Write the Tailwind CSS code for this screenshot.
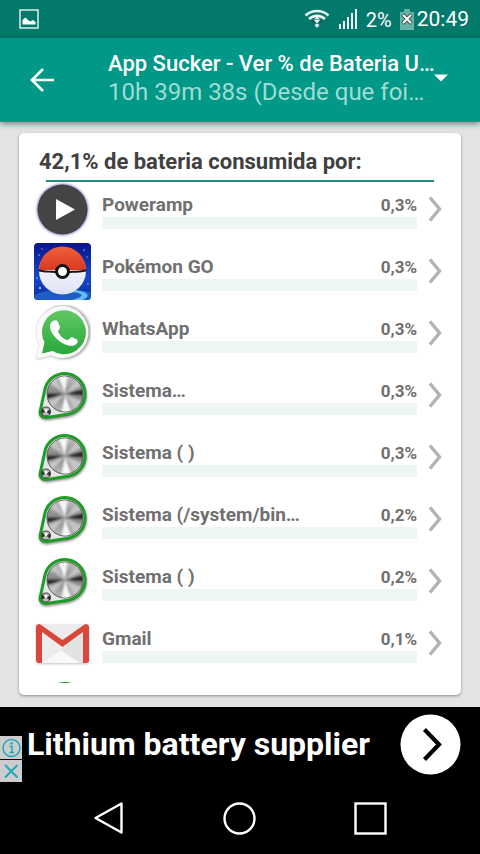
<!DOCTYPE html>
<html lang="pt">
<head>
  <meta charset="UTF-8">
  <meta name="viewport" content="width=device-width, initial-scale=1.0">
  <title>App Sucker</title>
  <script src="https://cdn.jsdelivr.net/npm/@tailwindcss/browser@4"></script>
</head>
<body class="flex flex-col h-screen overflow-hidden bg-[#e4e4e4] font-[Roboto,sans-serif]">

  <!-- Shared icons -->
  <svg class="absolute h-0 w-0" aria-hidden="true">
    <defs>
      <linearGradient id="red" x1="0" y1="0" x2="0" y2="1"><stop offset="0" stop-color="#f0603a"/><stop offset="1" stop-color="#d93a20"/></linearGradient>
      <linearGradient id="sky" x1="0" y1="0" x2="0" y2="1"><stop offset="0" stop-color="#08158a"/><stop offset="0.6" stop-color="#1648c8"/><stop offset="1" stop-color="#0b2a9c"/></linearGradient>
      <linearGradient id="white" x1="0" y1="0" x2="0" y2="1"><stop offset="0" stop-color="#ffffff"/><stop offset="1" stop-color="#dfe4f4"/></linearGradient>
      <linearGradient id="whats" x1="0" y1="0" x2="0" y2="1"><stop offset="0" stop-color="#62c864"/><stop offset="1" stop-color="#28a83c"/></linearGradient>
      <linearGradient id="metal" x1="0" y1="0" x2="0" y2="1"><stop offset="0" stop-color="#c4c4c4"/><stop offset="0.5" stop-color="#808080"/><stop offset="1" stop-color="#bdbdbd"/></linearGradient>
      <filter id="soft" x="-20%" y="-20%" width="140%" height="140%"><feGaussianBlur stdDeviation="1.3"/></filter>
      <clipPath id="disc"><circle cx="31" cy="27" r="17.500"/></clipPath>
    </defs>
    <symbol id="drum" viewBox="0 0 57 57">
      <path d="M31 6.500 A20.500 20.500 0 0 1 34 47.200 L13 50.500 C8 51 5 48 6.500 43 L11 22 A20.500 20.500 0 0 1 31 6.500Z" fill="#444" stroke="#444" stroke-width="3" opacity="0.6" filter="url(#soft)" transform="translate(0.5 1.5)"/>
      <path d="M31 6.500 A20.500 20.500 0 0 1 34 47.200 L13 50.500 C8 51 5 48 6.500 43 L11 22 A20.500 20.500 0 0 1 31 6.500Z" fill="#e6e6e6" stroke="#1d9c26" stroke-width="3"/>
      <circle cx="31" cy="27" r="18" fill="url(#metal)" stroke="#555" stroke-width="1"/>
      <g clip-path="url(#disc)">
        <g filter="url(#soft)">
          <path d="M31 27 L23 5 L34 5Z M31 27 L27 49 L38 49Z" fill="#f8f8f8"/>
          <path d="M31 27 L10 12 L18 6Z M31 27 L50 35 L43 46Z M31 27 L10 36 L16 44Z M31 27 L46 8 L52 16Z" fill="#c4c4c4"/>
          <path d="M31 27 L10 27 L10 32Z M31 27 L52 22 L52 28Z" fill="#222"/>
        </g>
      </g>
      <circle cx="12" cy="44.500" r="4.500" fill="#bbb" stroke="#444" stroke-width="1.200"/>
      <path d="M12 44.500 L8 41.500 L8 46.500Z M12 44.500 L16 42.500 L16 47.500Z" fill="#333"/>
      <circle cx="12" cy="43.500" r="1.500" fill="#fff"/>
    </symbol>
    <symbol id="chevron" viewBox="0 0 14 28">
      <path d="M2 2.500 L11.500 14 L2 25.500" fill="none" stroke="#b2b2b2" stroke-width="3.400"/>
    </symbol>
  </svg>

  <!-- Status bar -->
  <div class="flex h-[38px] shrink-0 items-center bg-[#02796b] pl-[19px] pr-[11px] text-white">
    <svg class="h-5 w-5" viewBox="0 0 20 20">
      <rect x="1" y="1" width="18" height="18" fill="none" stroke="#fff" stroke-width="1.300"/>
      <path d="M3.500 15.500 V11 L6.500 8.500 L9.500 11.500 L11 12.500 L14 11 L16.500 13 V15.500Z" fill="#fff"/>
    </svg>
    <svg class="ml-auto h-5 w-[26px]" viewBox="0 0 26 20" fill="none" stroke="#e8f8f5">
      <path d="M1.500 6.500 C8 0.500 18 0.500 24.500 6.500" stroke-width="2.600"/>
      <path d="M5 10 C9.500 5.800 16.500 5.800 21 10" stroke-width="2.600"/>
      <path d="M8 13.500 C11.500 10 14.500 10 18 13.500" stroke="#24524c" stroke-width="2"/>
      <path d="M13 7.500 L16 10.500 H10Z M10 11 H16 L13 14.500Z" fill="#e8f8f5" stroke="none"/>
      <path d="M10.500 16 L13 14.500 L15.500 16 L13 19Z" fill="#e8f8f5" stroke="none"/>
    </svg>
    <svg class="ml-2 h-[22px] w-5" viewBox="0 0 20 22" fill="#e8f8f5">
      <path d="M1 16h2v5H1zM5 13h2v8H5zM9 9h2v12H9zM13 5h2v16h-2zM17 1h2v20h-2z"/>
    </svg>
    <span class="ml-2 pt-0.5 text-xl">2%</span>
    <svg class="ml-2 h-[22px] w-[14px]" viewBox="0 0 14 22">
      <path d="M4 1h6v3h4v18H0V4h4z" fill="#66b3a8"/>
      <path d="M2.500 6.500 L11.500 15.500 M11.500 6.500 L2.500 15.500" stroke="#3b5a55" stroke-width="4"/>
      <path d="M3 7 L11 15 M11 7 L3 15" stroke="#fff" stroke-width="2"/>
    </svg>
    <span class="ml-[3px] pt-0.5 text-[21px]">20:49</span>
  </div>

  <!-- Toolbar -->
  <header class="relative flex h-[84px] shrink-0 items-center bg-[#019888] pl-[29px] pr-8 shadow-[0_2px_6px_rgba(0,0,0,0.45)]">
    <button class="shrink-0" type="button" aria-label="Voltar">
      <svg class="h-[26px] w-[26px]" viewBox="0 0 26 26" fill="none" stroke="#fff" stroke-width="2.600">
        <path d="M25 13 H3 M14 2 L3 13 L14 24"/>
      </svg>
    </button>
    <button class="ml-[53px] flex min-w-0 flex-1 items-center pb-1 text-left" type="button">
      <span class="min-w-0 flex-1 whitespace-nowrap">
        <span class="block text-[22px] leading-[29px] font-medium text-white">App Sucker - Ver % de Bateria U…</span>
        <span class="block text-2xl leading-[29px] text-[#9fdcd4]">10h 39m 38s (Desde que foi…</span>
      </span>
      <svg class="h-2 w-[14px] shrink-0" viewBox="0 0 14 8"><path d="M0 0.500h14L7 7.500z" fill="#fff"/></svg>
    </button>
  </header>

  <!-- Battery usage -->
  <main class="flex min-h-0 flex-1 flex-col px-[19px] pt-[11px] pb-3">
    <section class="flex min-h-0 flex-1 flex-col rounded-[5px] bg-white pb-3 shadow-[0_1px_3px_rgba(0,0,0,0.4)]">
      <h1 class="h-[47px] shrink-0 px-5 pt-3 text-[22px] leading-[33px] font-bold text-[#404040]">42,1% de bateria consumida por:</h1>
      <div class="mx-[27px] h-[2px] shrink-0 bg-[#258b80]"></div>
      <ul class="-mt-1 min-h-0 flex-1 overflow-hidden text-[#707070]">
        <li class="flex h-[62px] items-center pr-[19px] pl-[15px]">
          <svg class="h-[57px] w-[57px] shrink-0" viewBox="0 0 57 57">
            <circle cx="28.500" cy="28.500" r="26" fill="#9a9ad8" filter="url(#soft)"/>
            <circle cx="28.500" cy="28.500" r="25" fill="#444"/>
            <path d="M22 18 L41 28.500 L22 39Z" fill="#fff"/>
          </svg>
          <div class="ml-[11px] min-w-0 flex-1 pt-[3px]">
            <div class="flex items-center justify-between leading-6 font-bold"><span class="text-[19px]">Poweramp</span><span class="text-[17px]">0,3%</span></div>
            <div class="h-3 bg-[#edf6f5]"></div>
          </div>
          <svg class="ml-[11px] h-7 w-[14px] shrink-0"><use href="#chevron"/></svg>
        </li>
        <li class="flex h-[62px] items-center pr-[19px] pl-[15px]">
          <svg class="h-[57px] w-[57px] shrink-0 rounded" viewBox="0 0 57 57">
            <rect width="57" height="57" fill="url(#sky)"/>
            <path d="M0 52 C12 45 40 46 57 49 V57 H0Z" fill="#1d5cc4"/>
            <path d="M36 49 C52 50 50 54 38 57 H48 C58 53 54 49 42 47Z" fill="#62bdf0"/>
            <g fill="#8fb4ff"><circle cx="5" cy="12" r="0.800"/><circle cx="8" cy="6" r="0.700"/><circle cx="50" cy="7" r="0.800"/><circle cx="53" cy="14" r="0.700"/><circle cx="6" cy="45" r="1.200"/><circle cx="3" cy="35" r="0.800"/><circle cx="54" cy="41" r="0.800"/></g>
            <circle cx="28.500" cy="28" r="23.500" fill="url(#white)"/>
            <path d="M5 27 A23.500 23.500 0 0 1 52 27Z" fill="url(#red)"/>
            <path d="M5 26.500 C14 28.500 43 28.500 52 26.500 V28.500 C43 30.500 14 30.500 5 28.500Z" fill="#111"/>
            <circle cx="28.500" cy="28.500" r="6" fill="#fff" stroke="#111" stroke-width="3"/>
          </svg>
          <div class="ml-[11px] min-w-0 flex-1 pt-[3px]">
            <div class="flex items-center justify-between leading-6 font-bold"><span class="text-[19px]">Pokémon GO</span><span class="text-[17px]">0,3%</span></div>
            <div class="h-3 bg-[#edf6f5]"></div>
          </div>
          <svg class="ml-[11px] h-7 w-[14px] shrink-0"><use href="#chevron"/></svg>
        </li>
        <li class="flex h-[62px] items-center pr-[19px] pl-[15px]">
          <svg class="h-[57px] w-[57px] shrink-0" viewBox="0 0 57 57">
            <path d="M2 54.500 L6 40 A27 27 0 1 1 17 51Z" fill="#777" opacity="0.6" filter="url(#soft)"/>
            <path d="M2 54 L5.500 39.500 A26 26 0 1 1 17 50.500Z" fill="#fafafa"/>
            <path d="M8 48.500 L10.500 37.500 A22 22 0 1 1 18.500 46Z" fill="url(#whats)"/>
            <path d="M19 16 C21 14.500 23 15 24 17 L26 22 C26.500 24 24 25 24 26.500 C26 31 29 33.500 33 35 C35 35.500 36 32 38 32 L43 34.500 C45 36 43 39.500 40 40.500 C31 43 16 31 16 21 C16 19 17 17 19 16Z" fill="#fff"/>
          </svg>
          <div class="ml-[11px] min-w-0 flex-1 pt-[3px]">
            <div class="flex items-center justify-between leading-6 font-bold"><span class="text-[19px]">WhatsApp</span><span class="text-[17px]">0,3%</span></div>
            <div class="h-3 bg-[#edf6f5]"></div>
          </div>
          <svg class="ml-[11px] h-7 w-[14px] shrink-0"><use href="#chevron"/></svg>
        </li>
        <li class="flex h-[62px] items-center pr-[19px] pl-[15px]">
          <svg class="h-[57px] w-[57px] shrink-0"><use href="#drum"/></svg>
          <div class="ml-[11px] min-w-0 flex-1 pt-[3px]">
            <div class="flex items-center justify-between leading-6 font-bold"><span class="text-[19px]">Sistema…</span><span class="text-[17px]">0,3%</span></div>
            <div class="h-3 bg-[#edf6f5]"></div>
          </div>
          <svg class="ml-[11px] h-7 w-[14px] shrink-0"><use href="#chevron"/></svg>
        </li>
        <li class="flex h-[62px] items-center pr-[19px] pl-[15px]">
          <svg class="h-[57px] w-[57px] shrink-0"><use href="#drum"/></svg>
          <div class="ml-[11px] min-w-0 flex-1 pt-[3px]">
            <div class="flex items-center justify-between leading-6 font-bold"><span class="text-[19px]">Sistema ( )</span><span class="text-[17px]">0,3%</span></div>
            <div class="h-3 bg-[#edf6f5]"></div>
          </div>
          <svg class="ml-[11px] h-7 w-[14px] shrink-0"><use href="#chevron"/></svg>
        </li>
        <li class="flex h-[62px] items-center pr-[19px] pl-[15px]">
          <svg class="h-[57px] w-[57px] shrink-0"><use href="#drum"/></svg>
          <div class="ml-[11px] min-w-0 flex-1 pt-[3px]">
            <div class="flex items-center justify-between leading-6 font-bold"><span class="text-[19px]">Sistema (/system/bin…</span><span class="text-[17px]">0,2%</span></div>
            <div class="h-3 bg-[#edf6f5]"></div>
          </div>
          <svg class="ml-[11px] h-7 w-[14px] shrink-0"><use href="#chevron"/></svg>
        </li>
        <li class="flex h-[62px] items-center pr-[19px] pl-[15px]">
          <svg class="h-[57px] w-[57px] shrink-0"><use href="#drum"/></svg>
          <div class="ml-[11px] min-w-0 flex-1 pt-[3px]">
            <div class="flex items-center justify-between leading-6 font-bold"><span class="text-[19px]">Sistema ( )</span><span class="text-[17px]">0,2%</span></div>
            <div class="h-3 bg-[#edf6f5]"></div>
          </div>
          <svg class="ml-[11px] h-7 w-[14px] shrink-0"><use href="#chevron"/></svg>
        </li>
        <li class="flex h-[62px] items-center pr-[19px] pl-[15px]">
          <svg class="h-[57px] w-[57px] shrink-0" viewBox="0 0 57 57">
            <rect x="2" y="10" width="53" height="39" rx="3" fill="#888" opacity="0.5" filter="url(#soft)"/>
            <rect x="2" y="9" width="53" height="39" rx="3" fill="#ececec"/>
            <path d="M8 48 L27 35 L46 48Z" fill="#f8f8f8"/>
            <path d="M27 35 L49 18 V48 H46Z" fill="#e2e2e2"/>
            <path d="M8 17 L28.500 32 L49 17 V48 H52 A3 3 0 0 0 55 45 V12 A3 3 0 0 0 50.500 9.500 L28.500 25 L6.500 9.500 A3 3 0 0 0 2 12 V45 A3 3 0 0 0 5 48 H8Z" fill="#d9473c"/>
          </svg>
          <div class="ml-[11px] min-w-0 flex-1 pt-[3px]">
            <div class="flex items-center justify-between leading-6 font-bold"><span class="text-[19px]">Gmail</span><span class="text-[17px]">0,1%</span></div>
            <div class="h-3 bg-[#edf6f5]"></div>
          </div>
          <svg class="ml-[11px] h-7 w-[14px] shrink-0"><use href="#chevron"/></svg>
        </li>
        <li class="flex h-[62px] items-center pr-[19px] pl-[15px]">
          <svg class="h-[57px] w-[57px] shrink-0"><use href="#drum"/></svg>
        </li>
      </ul>
    </section>
  </main>

  <!-- Ad banner -->
  <aside class="flex h-[75px] shrink-0 items-center bg-black pr-[19px] text-white">
    <div class="flex w-[22px] shrink-0 flex-col gap-px self-end">
      <button class="h-[23px] bg-[#cdcdcd]" type="button" aria-label="Sobre o anúncio">
        <svg class="h-[23px] w-[22px]" viewBox="0 0 22 23" fill="none" stroke="#1fa8bd">
          <circle cx="11.500" cy="12" r="8.500" stroke-width="1.500"/>
          <path d="M9.500 10.500 H12 V16 M9.500 16.500 H14" stroke-width="1.500"/>
          <circle cx="11.500" cy="7.500" r="1.300" fill="#1fa8bd" stroke="none"/>
        </svg>
      </button>
      <button class="h-[22px] bg-[#cdcdcd]" type="button" aria-label="Fechar anúncio">
        <svg class="h-[22px] w-[22px]" viewBox="0 0 22 22"><path d="M5 5 L17.500 17.500 M17.500 5 L5 17.500" stroke="#1fa8bd" stroke-width="2"/></svg>
      </button>
    </div>
    <a class="ml-[5px] flex flex-1 items-center justify-between" href="#">
      <span class="pb-0.5 text-[32px] leading-9 font-bold whitespace-nowrap">Lithium battery supplier</span>
      <svg class="h-[61px] w-[61px] shrink-0" viewBox="0 0 61 61">
        <circle cx="30.500" cy="30.500" r="30" fill="#fff"/>
        <path d="M24.500 15.500 L39 30.500 L24.500 45.500" fill="none" stroke="#000" stroke-width="4.200"/>
      </svg>
    </a>
  </aside>

  <!-- Navigation bar -->
  <nav class="flex h-[72px] shrink-0 items-center justify-between bg-black px-[92px]">
    <button type="button" aria-label="Voltar">
      <svg class="h-9 w-9" viewBox="0 0 36 36"><path d="M29.500 3.500 V32.500 L3.500 18Z" fill="none" stroke="#fff" stroke-width="2.400" stroke-linejoin="round"/></svg>
    </button>
    <button type="button" aria-label="Início">
      <svg class="h-9 w-9" viewBox="0 0 36 36"><circle cx="17.500" cy="18.500" r="15" fill="none" stroke="#fff" stroke-width="2.400"/></svg>
    </button>
    <button type="button" aria-label="Recentes">
      <svg class="h-9 w-9" viewBox="0 0 36 36"><rect x="3.500" y="3.500" width="30" height="30" fill="none" stroke="#fff" stroke-width="2.400"/></svg>
    </button>
  </nav>

</body>
</html>
